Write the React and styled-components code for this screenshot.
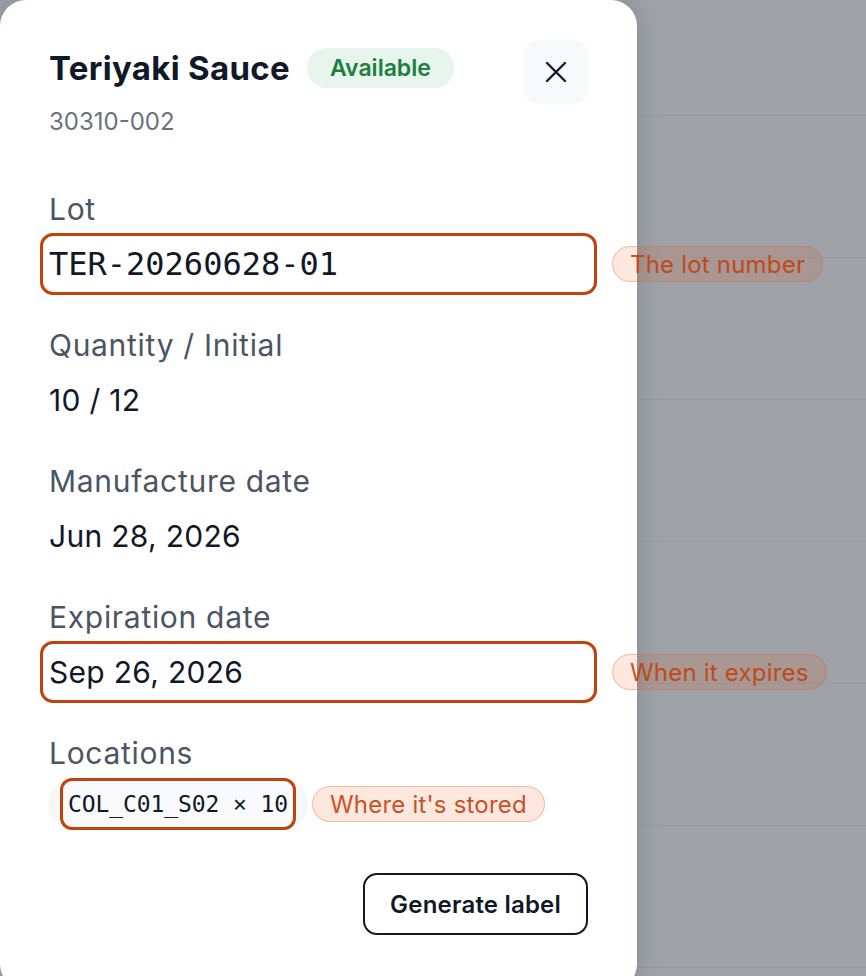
import styled, { createGlobalStyle } from "styled-components";

const GlobalStyle = createGlobalStyle`
    html, body {
        margin: 0;
        padding: 0;
        overflow: hidden;
    }
    body {
        font-family: Inter, "Noto Sans", "Liberation Sans", sans-serif;
        -webkit-font-smoothing: antialiased;
    }
    * {
        box-sizing: border-box;
    }
`;

const fields = [
    { label: "Lot", value: "TER-20260628-01", mono: true, note: "The lot number" },
    { label: "Quantity / Initial", value: "10 / 12" },
    { label: "Manufacture date", value: "Jun 28, 2026" },
    { label: "Expiration date", value: "Sep 26, 2026", note: "When it expires" },
];

const rows = [116, 142, 142, 142, 142, 142, 142];

const CloseIcon = () => (
    <svg width="22" height="22" viewBox="0 0 22 22" fill="none">
        <path d="M2 2 L20 20 M20 2 L2 20" stroke="#111827" strokeWidth="2.4" strokeLinecap="round" />
    </svg>
);

const App = () => {
    return (
        <Page>
            <GlobalStyle />
            <Backdrop>
                {rows.map((h, i) => (
                    <BackdropRow key={i} $height={h} />
                ))}
            </Backdrop>

            <Panel>
                <Header>
                    <HeadText>
                        <TitleRow>
                            <Title>Teriyaki Sauce</Title>
                            <Badge>Available</Badge>
                        </TitleRow>
                        <Sku>30310-002</Sku>
                    </HeadText>
                    <CloseButton aria-label="Close">
                        <CloseIcon />
                    </CloseButton>
                </Header>

                <Fields>
                    {fields.map((f) => (
                        <Field key={f.label}>
                            <Label>{f.label}</Label>
                            <ValueRow>
                                <ValueBox $marked={!!f.note} $mono={f.mono}>
                                    {f.value}
                                </ValueBox>
                                {f.note && <Note>{f.note}</Note>}
                            </ValueRow>
                        </Field>
                    ))}

                    <Field>
                        <Label>Locations</Label>
                        <ChipRow>
                            <Chip>
                                <ChipMark>COL_C01_S02 × 10</ChipMark>
                            </Chip>
                            <Note $small>Where it's stored</Note>
                        </ChipRow>
                    </Field>
                </Fields>

                <Footer>
                    <Button>Generate label</Button>
                </Footer>
            </Panel>
        </Page>
    );
};

export default App;

const Page = styled.div`
    position: relative;
    width: 866px;
    height: 976px;
    overflow: hidden;
    background-color: #9fa2a9;
`;

const Backdrop = styled.div`
    display: flex;
    flex-direction: column;
`;

const BackdropRow = styled.div`
    height: ${props => props.$height}px;
    border-bottom: 1px solid #979aa1;
`;

const Panel = styled.div`
    position: absolute;
    left: 0;
    top: 0;
    width: 637px;
    height: 990px;
    background-color: #ffffff;
    border-radius: 26px;
    padding: 40px 49px 0 49px;
    box-shadow: 0 0 24px rgba(17, 24, 39, 0.18);
    display: flex;
    flex-direction: column;
`;

const Header = styled.div`
    display: flex;
    align-items: flex-start;
    justify-content: space-between;
`;

const HeadText = styled.div`
    display: flex;
    flex-direction: column;
`;

const TitleRow = styled.div`
    display: flex;
    align-items: center;
    gap: 17px;
    margin-top: 8px;
    height: 40px;
`;

const Title = styled.div`
    font-size: 33px;
    font-weight: 700;
    letter-spacing: 0.3px;
    color: #111827;
    white-space: nowrap;
`;

const Badge = styled.div`
    height: 40px;
    display: flex;
    align-items: center;
    padding: 0 23px;
    border-radius: 20px;
    background-color: #e8f5ec;
    color: #1a7f3f;
    font-size: 23px;
    font-weight: 600;
`;

const Sku = styled.div`
    margin-top: 20px;
    font-size: 24px;
    line-height: 28px;
    color: #6b7280;
`;

const CloseButton = styled.div`
    width: 64px;
    height: 64px;
    border-radius: 16px;
    background-color: #f7f9fb;
    display: flex;
    align-items: center;
    justify-content: center;
    cursor: pointer;
`;

const Fields = styled.div`
    margin-top: 55px;
    display: flex;
    flex-direction: column;
    gap: 32px;
`;

const Field = styled.div`
    display: flex;
    flex-direction: column;
`;

const Label = styled.div`
    font-size: 30px;
    line-height: 36px;
    letter-spacing: 0.7px;
    color: #4b5563;
`;

const ValueRow = styled.div`
    display: flex;
    align-items: center;
    margin-top: 6px;
`;

const ValueBox = styled.div`
    flex: 0 0 557px;
    height: 62px;
    margin: 0 -9px;
    padding: 0 6px;
    display: flex;
    align-items: center;
    border: 3px solid ${props => props.$marked ? "#c2410c" : "transparent"};
    border-radius: 13px;
    color: #111827;
    font-size: 30px;
    letter-spacing: 0.3px;
    white-space: nowrap;

    ${props => props.$mono && `
        font-family: "DejaVu Sans Mono", "Liberation Mono", monospace;
        font-size: 32px;
        letter-spacing: 0;
    `}
`;

const Note = styled.div`
    flex: none;
    margin-left: ${props => props.$small ? "4px" : "24px"};
    height: 36px;
    display: flex;
    align-items: center;
    padding: 0 17px;
    border-radius: 18px;
    background-color: rgba(234, 88, 12, 0.15);
    border: 1.5px solid rgba(234, 88, 12, 0.35);
    color: #c2410c;
    font-size: 24px;
    letter-spacing: 0.2px;
    white-space: nowrap;
    opacity: 0.9;
`;

const ChipRow = styled.div`
    display: flex;
    align-items: center;
    margin-top: 8px;
`;

const Chip = styled.div`
    height: 50px;
    margin-left: -1px;
    padding: 0 12px;
    display: flex;
    align-items: center;
    border-radius: 25px;
    background-color: #f5f7fa;
`;

const ChipMark = styled.div`
    height: 52px;
    padding: 0 5px;
    display: flex;
    align-items: center;
    border: 3px solid #c2410c;
    border-radius: 12px;
    background-color: #f8fafc;
    color: #111827;
    font-family: "DejaVu Sans Mono", "Liberation Mono", monospace;
    font-size: 23px;
    letter-spacing: -0.1px;
    white-space: nowrap;
`;

const Footer = styled.div`
    display: flex;
    justify-content: flex-end;
    margin-top: 44px;
`;

const Button = styled.div`
    height: 62px;
    padding: 0 25px;
    display: flex;
    align-items: center;
    border: 2px solid #111827;
    border-radius: 14px;
    font-size: 24px;
    font-weight: 600;
    letter-spacing: 0.2px;
    color: #111827;
    cursor: pointer;
`;
